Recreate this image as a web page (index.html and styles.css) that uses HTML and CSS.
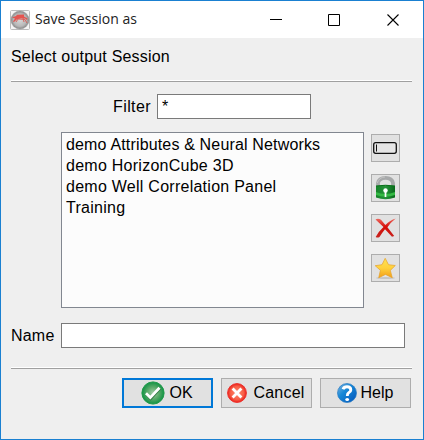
FILE: index.html
```html
<!DOCTYPE html>
<html lang="en">
<head>
<meta charset="utf-8">
<title>Save Session as</title>
<link rel="stylesheet" href="styles.css">
</head>
<body>
<main class="window">
  <header class="titlebar">
    <svg class="app-icon" width="20" height="20" viewBox="0 0 20 20">
      <defs><radialGradient id="metal"><stop offset="0" stop-color="#d8d8d8"/><stop offset=".7" stop-color="#b8b8b8"/><stop offset="1" stop-color="#858585"/></radialGradient></defs>
      <rect x=".5" y=".5" width="19" height="19" rx="1" fill="#f5f5f5" stroke="#bbb"/>
      <circle cx="10" cy="10" r="9" fill="url(#metal)" stroke="#999" stroke-width=".6"/>
      <path d="M2 7.5 6 6 7 4.8 14 4.5 14 6.5 17.5 8.5 17 10 15 8.5 11 8.5 7 9.3 4 12 3 11.5 5 8.5Z" fill="#e84843" opacity=".9"/>
      <path d="M6 12 8 9 15 9.5 17 13M13 8 14 12" stroke="#dc5a53" stroke-width=".9" fill="none"/>
    </svg>
    <h1 class="title">Save Session as</h1>
    <svg class="controls" width="130" height="12" viewBox="0 0 130 12">
      <path d="M0 5.5H12M58.5.5H69.5V11.5H58.5Z" fill="none" stroke="#000"/>
      <path d="M117.5.5 128.5 11.5M128.5.5 117.5 11.5" fill="none" stroke="#000" stroke-width="1.1"/>
    </svg>
  </header>
  <div class="content">
    <p class="prompt">Select output Session</p>
    <div class="separator"></div>
    <div class="filter-row"><label for="filter">Filter</label><input id="filter" class="field" value="*"></div>
    <div class="browser">
      <ul class="sessions">
        <li class="attributes">demo Attributes &amp; Neural Networks</li>
        <li>demo HorizonCube 3D</li>
        <li>demo Well Correlation Panel</li>
        <li>Training</li>
      </ul>
      <div class="tools">
        <button class="tool" aria-label="Rename"><svg width="27" height="26" viewBox="0 0 27 26"><rect x="1.7" y="7.7" width="22.6" height="10.6" rx="2" fill="#e5e5e5" stroke="#111" stroke-width="1.3"/><path d="M4.5 9.5V16.5" stroke="#111"/></svg></button>
        <button class="tool" aria-label="Lock"><svg width="27" height="26" viewBox="0 0 27 26">
          <defs><linearGradient id="lock"><stop stop-color="#168329"/><stop offset=".5" stop-color="#26933a"/><stop offset="1" stop-color="#08691b"/></linearGradient></defs>
          <path d="M6 12V8Q7 2.8 13.5 2.8T21 8V12" fill="none" stroke="#a7a9aa" stroke-width="3.8"/><path d="M5.3 8Q7 2.2 13 2" fill="none" stroke="#c4c4c4"/>
          <path d="M4 11Q13.5 9.5 23 11V22.5Q13.5 26 4 22.5Z" fill="url(#lock)"/><path d="M4 17Q13.5 21 23 17V20Q13.5 23.5 4 20Z" fill="#35b944"/><path d="M4 11Q13.5 9.5 23 11" fill="none" stroke="#087019"/>
          <circle cx="13.5" cy="15.5" r="2.2" fill="#fff"/><path d="M13.5 16V22" stroke="#fff" stroke-width="1.7"/>
        </svg></button>
        <button class="tool" aria-label="Remove"><svg width="27" height="26" viewBox="0 0 27 26">
          <defs><linearGradient id="cross" x2="0" y2="1"><stop stop-color="#ed6960"/><stop offset=".45" stop-color="#d50c06"/><stop offset="1" stop-color="#c72520"/></linearGradient></defs>
          <path d="M3.5 4.5Q6 2.8 9 4.7L13.4 10Q18 5 23.7 3.5 18 8 15.4 12.3L22.2 21 20 21.7 13 14.3Q10 18 7.5 22 5.5 23.2 3.7 22 6 17 11.5 12Z" fill="url(#cross)"/>
        </svg></button>
        <button class="tool" aria-label="Set as default"><svg width="27" height="26" viewBox="0 0 27 26">
          <defs><linearGradient id="gold" x2="0" y2="1"><stop stop-color="#ffe254"/><stop offset=".5" stop-color="#ffd13c"/><stop offset="1" stop-color="#f29e19"/></linearGradient></defs>
          <ellipse cx="13.5" cy="23" rx="9.5" ry="1" fill="#c5c5c5"/>
          <path d="M13.2 3.3 16.5 9.7 23.3 10.5 18.3 15.4 20.3 22.8 13.5 19.4 6.7 22.8 8.4 15.3 3.2 10.7 10 9.7Z" fill="url(#gold)" stroke="#e5a129" stroke-width=".7" stroke-linejoin="round"/>
        </svg></button>
      </div>
    </div>
    <div class="name-row"><label for="name">Name</label><input id="name" class="field"></div>
    <div class="separator"></div>
    <div class="actions">
      <button class="action primary"><svg width="24" height="24" viewBox="0 0 24 24"><defs><radialGradient id="green"><stop stop-color="#a2cda6"/><stop offset=".55" stop-color="#58a968"/><stop offset="1" stop-color="#119344"/></radialGradient></defs><circle cx="12" cy="12" r="11.1" fill="url(#green)" stroke="#229b4c"/><path d="M5.5 13 9.6 17.3 19 7.2" fill="none" stroke="#317b42" stroke-width="3.2"/><path d="M5 12.3 9.3 16.6 18.5 6.7" fill="none" stroke="#fff" stroke-width="2.8"/></svg><span>OK</span></button>
      <button class="action cancel"><svg width="20" height="20" viewBox="0 0 20 20"><defs><radialGradient id="red"><stop stop-color="#ff8d72"/><stop offset=".7" stop-color="#f75f47"/><stop offset="1" stop-color="#eb211c"/></radialGradient></defs><circle cx="10" cy="10" r="9.4" fill="url(#red)" stroke="#ed302b"/><path d="M5.6 5.6 14.4 14.4M14.4 5.6 5.6 14.4" stroke="#fff" stroke-width="2.8"/></svg><span>Cancel</span></button>
      <button class="action help"><svg width="20" height="20" viewBox="0 0 20 20"><defs><linearGradient id="blue" y2="1"><stop stop-color="#83b6df"/><stop offset=".4" stop-color="#1688d7"/><stop offset="1" stop-color="#0354ba"/></linearGradient></defs><circle cx="10" cy="10" r="9.5" fill="url(#blue)" stroke="#2479c2" stroke-width=".7"/><path d="M6 6.2Q7 3.8 10 3.8 13.8 3.8 13.8 7 13.8 8.7 11.7 9.8 10.3 10.6 10.3 13" fill="none" stroke="#fff" stroke-width="2.9"/><ellipse cx="10.2" cy="16.5" rx="1.9" ry="1.6" fill="#fff"/></svg><span>Help</span></button>
    </div>
  </div>
</main>
</body>
</html>
```
FILE: styles.css
```css
* { box-sizing: border-box; }
body { margin: 0; }
.window { width: 424px; height: 440px; border: 1px solid #1a80d1; background: #efefef; color: #000; font: 16px/21px "Liberation Sans", Arial, sans-serif; overflow: hidden; }
.titlebar { display: flex; align-items: center; height: 37px; padding: 0 0 0 9px; background: #fff; }
.app-icon { flex: none; }
.title { width: 103px; margin: 0 0 1px 5px; font: 14px/20px "Open Sans", "Noto Sans", sans-serif; letter-spacing: .04px; white-space: nowrap; color: #222; }
.controls { flex: none; margin-left: 132px; }
.content { padding: 0 11px 0 10px; }
.prompt { height: 42px; margin: 0; padding-top: 8px; letter-spacing: .2px; }
.separator { height: 2px; border-top: 1px solid #fff; border-bottom: 1px solid #a0a0a0; }
.filter-row { display: flex; align-items: center; height: 25px; margin: 12px 0 13px 102px; }
.filter-row label { width: 44px; letter-spacing: .4px; white-space: nowrap; }
.filter-row .field { width: 154px; }
.field { height: 25px; border: 1px solid #7a7a7a; border-radius: 0; padding: 0 4px; background: #fff; color: #000; font: inherit; outline: 0; }
.browser { display: flex; gap: 7px; height: 176px; margin-left: 50px; }
.sessions { width: 303px; height: 176px; margin: 0; padding: 1px 4px; border: 1px solid #828790; background: #fcfcfc; list-style: none; white-space: nowrap; letter-spacing: .26px; }
.attributes { letter-spacing: .16px; }
.tools { display: flex; flex-direction: column; gap: 12px; padding-top: 2px; }
.tool { width: 29px; height: 28px; padding: 0; border: 1px solid #adadad; background: #e1e1e1; }
.tool svg { display: block; }
.name-row { display: flex; align-items: center; margin: 15px 0 19px; }
.name-row label { width: 50px; letter-spacing: .2px; }
.name-row .field { width: 344px; }
.actions { display: flex; gap: 8px; justify-content: flex-end; margin: 9px 1px 0 0; }
.action { display: flex; align-items: center; justify-content: center; gap: 4px; width: 91px; height: 30px; padding: 0 1px 0 0; border: 1px solid #adadad; background: #e1e1e1; color: #000; font: inherit; }
.action span { position: relative; top: -1px; }
.action.primary { border: 2px solid #0078d7; }
.action.cancel { gap: 6px; letter-spacing: .2px; }
```
